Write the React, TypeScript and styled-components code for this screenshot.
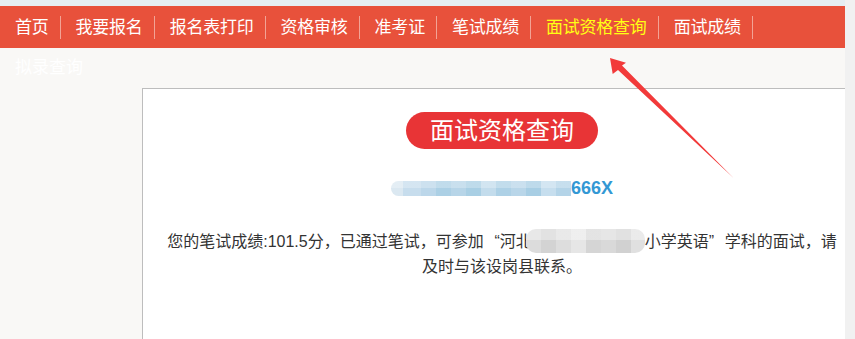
import React from "react";
import styled, { createGlobalStyle } from "styled-components";

const Global = createGlobalStyle`
  html, body {
    margin: 0;
    padding: 0;
    background: #f9f8f6;
    overflow: hidden;
  }
  body {
    font-family: "Liberation Sans", "Noto Sans CJK SC", sans-serif;
  }
`;

const Page = styled.div`
  position: relative;
  display: flex;
  width: 855px;
  height: 339px;
  overflow: hidden;
`;

const Main = styled.div`
  width: 845px;
  display: flex;
  flex-direction: column;
  background: #f9f8f6;
`;

const SideStrip = styled.div`
  width: 10px;
  background: #f1f1f1;
`;

const TopStrip = styled.div`
  height: 6px;
  background: #e6eef2;
`;

const Nav = styled.ul`
  display: flex;
  align-items: center;
  height: 42px;
  margin: 0;
  padding: 0;
  list-style: none;
  background: #e8513b;
`;

const NavItem = styled.li<{ $active?: boolean }>`
  height: 23px;
  line-height: 23px;
  padding: 0 11px 0 15px;
  border-right: 1px solid #f2a395;
  font-size: 17px;
  letter-spacing: -0.23px;
  color: ${(p) => (p.$active ? "#ffff14" : "#ffffff")};
  white-space: nowrap;
`;

const SubRow = styled.div`
  height: 40px;
  line-height: 40px;
  padding-left: 15px;
  font-size: 17px;
  color: #ffffff;
`;

const Panel = styled.div`
  flex: 1;
  margin-left: 142px;
  border-top: 1px solid #bdbdbd;
  border-left: 1px solid #bdbdbd;
  background: #ffffff;
  padding: 23px 0 0 16px;
  display: flex;
  flex-direction: column;
  align-items: center;
`;

const Pill = styled.div`
  width: 192px;
  height: 37px;
  line-height: 37px;
  border-radius: 19px;
  background: #e83436;
  color: #ffffff;
  font-size: 24px;
  text-align: center;
`;

const IdLine = styled.div`
  margin-top: 29px;
  height: 20px;
  line-height: 20px;
  display: flex;
  align-items: center;
  font-size: 18px;
  font-weight: bold;
  color: #3398d4;
`;

const IdMosaic = styled.span`
  display: inline-block;
  width: 180px;
  height: 15px;
  border-radius: 8px 0 0 8px;
  background:
    linear-gradient(180deg, rgba(255, 255, 255, 0.25) 0 50%, rgba(255, 255, 255, 0) 50% 100%),
    linear-gradient(
      90deg,
      #dbe8f1 0 12px,
      #c7dded 12px 30px,
      #bcd7ea 30px 45px,
      #acd0e5 45px 60px,
      #b7d5e8 60px 75px,
      #a9cfe4 75px 90px,
      #c3dcec 90px 105px,
      #aed1e6 105px 120px,
      #b9d6e9 120px 135px,
      #a8cee4 135px 150px,
      #c6deee 150px 165px,
      #b4d4e8 165px 180px
    );
`;

const Message = styled.p`
  margin: 31px 0 0 0;
  font-size: 16px;
  line-height: 25px;
  color: #333333;
  text-align: center;
  white-space: nowrap;
`;

const Quote = styled.span<{ $side: "open" | "close" }>`
  display: inline-block;
  width: 1em;
  text-align: ${(p) => (p.$side === "open" ? "right" : "left")};
`;

const TextMosaic = styled.span`
  display: inline-block;
  width: 119px;
  height: 24px;
  margin-left: -6px;
  vertical-align: -6px;
  border-radius: 10px;
  background:
    linear-gradient(180deg, rgba(255, 255, 255, 0.35) 0 45%, rgba(255, 255, 255, 0) 45% 100%),
    linear-gradient(
      90deg,
      #dcdcdc 0 15px,
      #d3d3d3 15px 30px,
      #dddddd 30px 45px,
      #e6e6e6 45px 60px,
      #d5d5d5 60px 75px,
      #d9d9d9 75px 90px,
      #d1d1d1 90px 105px,
      #e0e0e0 105px 119px
    );
`;

const ArrowLayer = styled.svg`
  position: absolute;
  left: 0;
  top: 0;
  pointer-events: none;
`;

const navItems = [
  "首页",
  "我要报名",
  "报名表打印",
  "资格审核",
  "准考证",
  "笔试成绩",
  "面试资格查询",
  "面试成绩",
];

export default function App() {
  return (
    <>
      <Global />
      <Page>
        <Main>
          <TopStrip />
          <Nav>
            {navItems.map((t) => (
              <NavItem key={t} $active={t === "面试资格查询"}>
                {t}
              </NavItem>
            ))}
          </Nav>
          <SubRow>拟录查询</SubRow>
          <Panel>
            <Pill>面试资格查询</Pill>
            <IdLine>
              <IdMosaic />
              666X
            </IdLine>
            <Message>
              您的笔试成绩:101.5分，已通过笔试，可参加
              <Quote $side="open">“</Quote>河北
              <TextMosaic />
              小学英语<Quote $side="close">”</Quote>学科的面试，请
              <br />
              及时与该设岗县联系。
            </Message>
          </Panel>
        </Main>
        <SideStrip />
        <ArrowLayer width="855" height="339" viewBox="0 0 855 339">
          <polygon
            points="610,58 612.7,74 618,70 733.5,178 622,65.5 626,62.7"
            fill="#f23a3a"
          />
        </ArrowLayer>
      </Page>
    </>
  );
}
